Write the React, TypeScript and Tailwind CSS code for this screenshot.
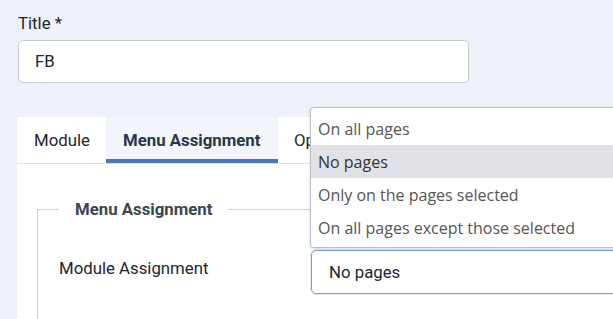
const options = ['On all pages', 'No pages', 'Only on the pages selected', 'On all pages except those selected']

export default function App() {
  return (
    <div className="relative h-[319px] w-[613px] overflow-hidden bg-[#eef2f8] font-['Roboto',sans-serif] text-[16.8px] text-[#22262a]">
      <div className="pl-[17px] pt-[11px]">
        <label className="ml-px block leading-[24px]">Title *</label>
        <div className="ml-px mt-[5px] flex h-[43px] w-[451px] items-center rounded-[5px] border border-[#c6cbd2] bg-white px-[16px]">
          FB
        </div>

        <div className="mt-[34px] w-[620px] bg-white">
          <div className="flex h-[47px] border-b border-[#dfe3e8]">
            <div className="flex w-[89px] items-center pl-[17px] pt-[2px]">Module</div>
            <div className="flex w-[172px] items-center border-b-4 border-[#5077ab] bg-[#f2f5f9] pl-[17px] pt-[6px] font-bold text-[#2a3548]">
              Menu Assignment
            </div>
            <div className="flex items-center pl-[16px] pt-[2px]">Options</div>
          </div>

          <div className="pl-[20px] pt-[33px]">
            <fieldset className="h-[140px] border border-[#cfd3d8] pl-[21px]">
              <legend className="px-[16px] font-bold leading-[24px] text-[#3d4450]">Menu Assignment</legend>
              <div className="mt-[29px] flex items-start">
                <div className="mt-[6px] w-[252px] leading-[24px]">Module Assignment</div>
                <div className="flex h-[44px] w-[320px] items-center rounded-[5px] border border-[#7d9dc8] px-[17px] pt-[1px] shadow-[0_0_0_1px_#e3ecf7]">
                  No pages
                </div>
              </div>
            </fieldset>
          </div>
        </div>
      </div>

      <div className="absolute left-[310px] top-[107px] w-[320px] rounded-bl-[4px] rounded-tl-[4px] border border-[#b9bec6] bg-white pb-[3px] pt-[4px] font-['Open_Sans',sans-serif] text-[16px] text-[#555] shadow-[0_1px_3px_rgba(0,0,0,0.15)]">
        {options.map((o) => (
          <div key={o} className={`flex h-[33px] items-center px-[7px] pt-[1px] ${o === 'No pages' ? 'bg-[#e1e1e8] text-[#333]' : ''}`}>
            {o}
          </div>
        ))}
      </div>
    </div>
  )
}
